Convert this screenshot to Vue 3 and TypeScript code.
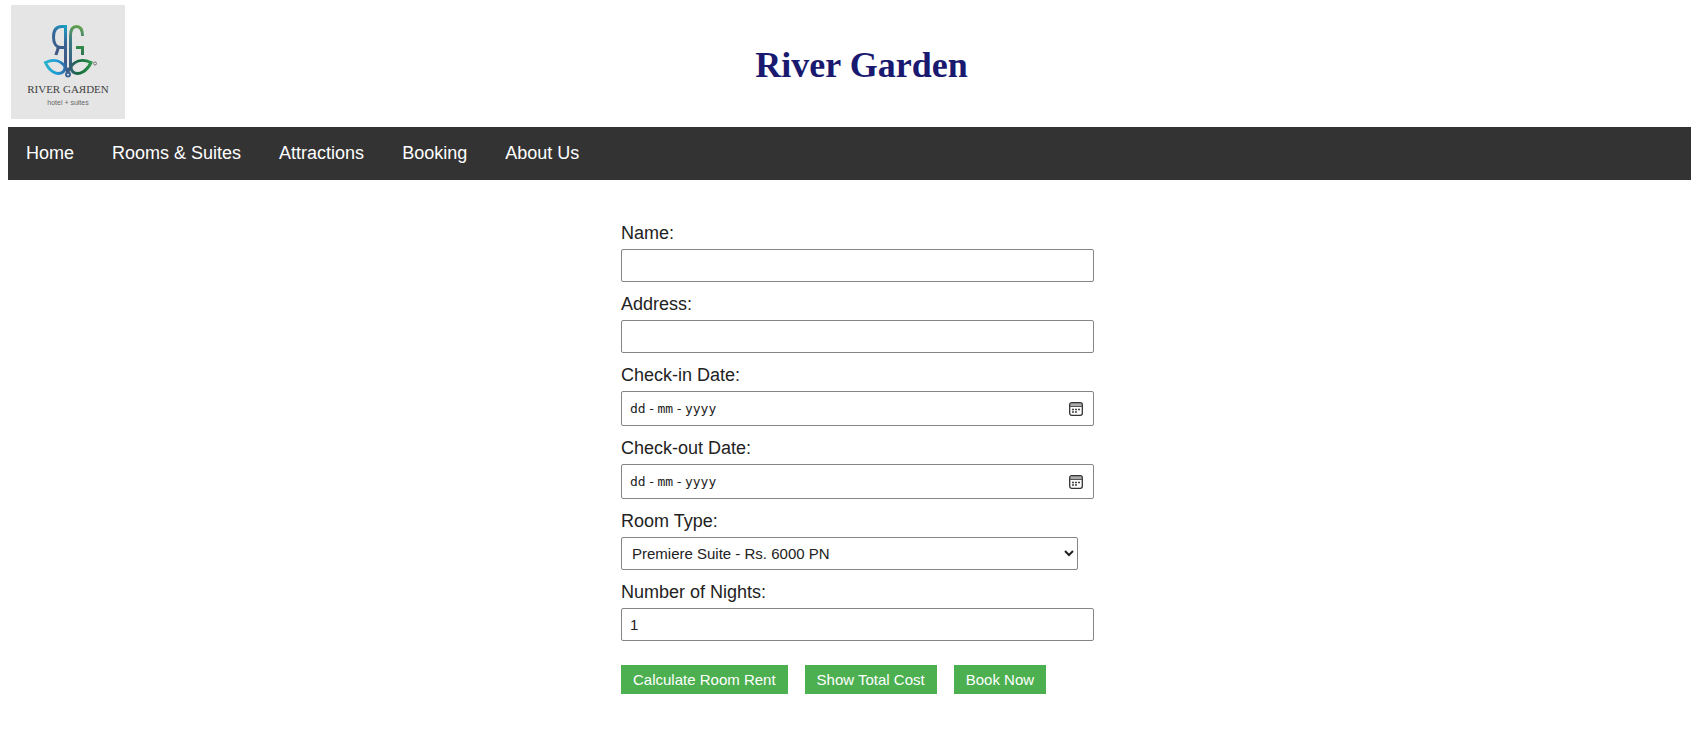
<script setup lang="ts">
import { ref } from 'vue'

const links = ['Home', 'Rooms & Suites', 'Attractions', 'Booking', 'About Us']

const roomTypes = [
  { label: 'Premiere Suite - Rs. 6000 PN', rate: 6000 },
]

const guestName = ref('')
const address = ref('')
const dates = ref([
  { id: 'check-in', label: 'Check-in Date:', value: '' },
  { id: 'check-out', label: 'Check-out Date:', value: '' },
])
const hintParts = ['dd', '-', 'mm', '-', 'yyyy']
const rate = ref(roomTypes[0].rate)
const nights = ref(1)
</script>

<template>
  <div class="page">
    <header class="banner">
      <svg class="logo" viewBox="0 0 114 114" role="img" aria-label="River Garden hotel + suites">
        <defs>
          <linearGradient id="blue" gradientUnits="userSpaceOnUse" x1="42" y1="48" x2="57" y2="20">
            <stop offset="0" stop-color="#40567f" />
            <stop offset=".6" stop-color="#35689c" />
            <stop offset="1" stop-color="#12a5c9" />
          </linearGradient>
          <linearGradient id="blueStem" gradientUnits="userSpaceOnUse" x1="0" y1="20" x2="0" y2="68">
            <stop offset="0" stop-color="#17a3c6" />
            <stop offset=".4" stop-color="#3a6294" />
            <stop offset="1" stop-color="#414f7c" />
          </linearGradient>
          <linearGradient id="green" gradientUnits="userSpaceOnUse" x1="60" y1="60" x2="70" y2="20">
            <stop offset="0" stop-color="#3b5d82" />
            <stop offset=".6" stop-color="#3b7b86" />
            <stop offset="1" stop-color="#67a544" />
          </linearGradient>
          <linearGradient id="hook" gradientUnits="userSpaceOnUse" x1="0" y1="42" x2="0" y2="50">
            <stop offset="0" stop-color="#2f8a45" />
            <stop offset="1" stop-color="#35705a" />
          </linearGradient>
          <linearGradient id="leafLeft" gradientUnits="userSpaceOnUse" x1="34" y1="0" x2="58" y2="0">
            <stop offset="0" stop-color="#27b5c9" />
            <stop offset=".5" stop-color="#1c9bd9" />
            <stop offset="1" stop-color="#3c5389" />
          </linearGradient>
          <linearGradient id="leafRight" gradientUnits="userSpaceOnUse" x1="57" y1="0" x2="82" y2="0">
            <stop offset="0" stop-color="#3c5b80" />
            <stop offset=".45" stop-color="#146a3d" />
            <stop offset="1" stop-color="#2f9a4a" />
          </linearGradient>
        </defs>
        <rect width="114" height="114" fill="#e5e5e5" />
        <g fill="none" stroke-width="3">
          <path d="M55 21.500H51C45 21.500 42.500 26 42.500 32C42.500 38 45 42.500 50 42.500H54M47 42.500C47 46 45.500 47 45 50" stroke="url(#blue)" />
          <path d="M54.500 20V62C54.500 65 56 66 58 68" stroke="url(#blueStem)" />
          <path d="M59.500 62V31C59.500 25 61.500 21.500 65.500 21.500C69.500 21.500 71.500 25 71.500 31" stroke="url(#green)" />
          <path d="M65 42.500H71.500V50" stroke="url(#hook)" />
          <path d="M57 66C51 55 44 53 34.500 57.500C38 66 46 71 52 67C55 64 54 61 54 58" stroke="url(#leafLeft)" />
          <path d="M57 66C63 55 70 53 80 57.500C76 66 68 71 62 67C59 64 60 61 60 58" stroke="url(#leafRight)" />
          <circle cx="57" cy="69.500" r="2" stroke="#3f6794" stroke-width="2" />
        </g>
        <circle cx="84" cy="58.500" r="1.500" fill="none" stroke="#777" />
        <text class="wordmark" x="57" y="88" text-anchor="middle">RIVER GAЯDEN</text>
        <text class="tagline" x="57" y="100" text-anchor="middle">hotel + suites</text>
      </svg>
      <h1>River Garden</h1>
    </header>

    <nav class="menu" aria-label="Main">
      <a v-for="link in links" :key="link" href="#">{{ link }}</a>
    </nav>

    <form class="booking" @submit.prevent>
      <div class="field">
        <label for="name">Name:</label>
        <input id="name" v-model="guestName" type="text">
      </div>
      <div class="field">
        <label for="address">Address:</label>
        <input id="address" v-model="address" type="text">
      </div>
      <div v-for="date in dates" :key="date.id" class="field">
        <label :for="date.id">{{ date.label }}</label>
        <div class="date">
          <input :id="date.id" v-model="date.value" type="date" :class="{ empty: !date.value }">
          <span v-if="!date.value" class="hint" aria-hidden="true">
            <span v-for="(part, i) in hintParts" :key="i">{{ part }}</span>
          </span>
          <svg class="calendar" viewBox="0 0 14 14" aria-hidden="true">
            <path d="M1 4V3Q1 1 3 1H11Q13 1 13 3V4Z" fill="#aaa" />
            <rect x=".7" y=".7" width="12.600" height="12.600" rx="2" fill="none" stroke="#333" stroke-width="1.300" />
            <path d="M1 4.500H13" stroke="#555" />
            <path d="M3 7.500H5M6 7.500H8M9 7.500H11M3 10H5M6 10H8" stroke="#444" stroke-width="1.500" />
          </svg>
        </div>
      </div>
      <div class="field">
        <label for="room">Room Type:</label>
        <select id="room" v-model="rate">
          <option v-for="room in roomTypes" :key="room.label" :value="room.rate">{{ room.label }}</option>
        </select>
      </div>
      <div class="field">
        <label for="nights">Number of Nights:</label>
        <input id="nights" v-model="nights" type="number" min="1">
      </div>
      <div class="actions">
        <button type="button">Calculate Room Rent</button>
        <button type="button">Show Total Cost</button>
        <button type="submit">Book Now</button>
      </div>
    </form>
  </div>
</template>

<style>
body {
  background: #fff;
}
</style>

<style scoped>
.page {
  padding: 5px 9px 0 8px;
  font-family: "Liberation Sans", Arial, sans-serif;
  color: #222;
}

.banner {
  display: grid;
  grid-template-columns: 114px 1fr 93px;
  align-items: center;
  padding-left: 3px;
}

.logo {
  display: block;
  width: 114px;
  height: 114px;
}

.wordmark {
  fill: #414141;
  font: 11px "Liberation Serif", serif;
}

.tagline {
  fill: #666;
  font: 7px "Liberation Sans", sans-serif;
}

h1 {
  margin: 0;
  padding-top: 6px;
  text-align: center;
  font: bold 36px/44px "Liberation Serif", "Times New Roman", serif;
  color: #191970;
}

.menu {
  display: flex;
  flex-wrap: wrap;
  gap: 16px 38px;
  margin-top: 8px;
  padding: 16px 18px;
  background: #333;
}

.menu a {
  color: #fff;
  font-size: 18px;
  line-height: 21px;
  text-decoration: none;
}

.booking {
  box-sizing: border-box;
  width: 457px;
  max-width: 100%;
  margin: 42px auto 0;
}

.field {
  margin-bottom: 11px;
}

label {
  display: block;
  margin-bottom: 5px;
  font-size: 18px;
  line-height: 22px;
}

input,
select {
  display: block;
  box-sizing: border-box;
  height: 33px;
  margin: 0;
  border: 1px solid #858585;
  border-radius: 2px;
  background: #fff;
  color: #222;
  font: 15px "Liberation Sans", Arial, sans-serif;
}

input {
  width: calc(100% + 16px);
  padding: 7px 8px;
}

select {
  width: 100%;
  padding: 0 6px;
}

.date {
  position: relative;
  width: calc(100% + 16px);
}

.date input {
  width: 100%;
  height: 35px;
}

.empty::-webkit-datetime-edit,
.date input::-webkit-calendar-picker-indicator {
  opacity: 0;
}

.hint {
  position: absolute;
  top: 0;
  left: 9px;
  display: flex;
  gap: 2px;
  font: 13px/35px "DejaVu Sans Mono", monospace;
  pointer-events: none;
}

.calendar {
  position: absolute;
  top: 11px;
  right: 11px;
  width: 14px;
  height: 14px;
  pointer-events: none;
}

.actions {
  display: flex;
  flex-wrap: wrap;
  gap: 17px;
  margin-top: 24px;
}

button {
  padding: 6px 12px;
  border: 0;
  background: #4caf50;
  color: #fff;
  font: 15px/17px "Liberation Sans", Arial, sans-serif;
}
</style>
